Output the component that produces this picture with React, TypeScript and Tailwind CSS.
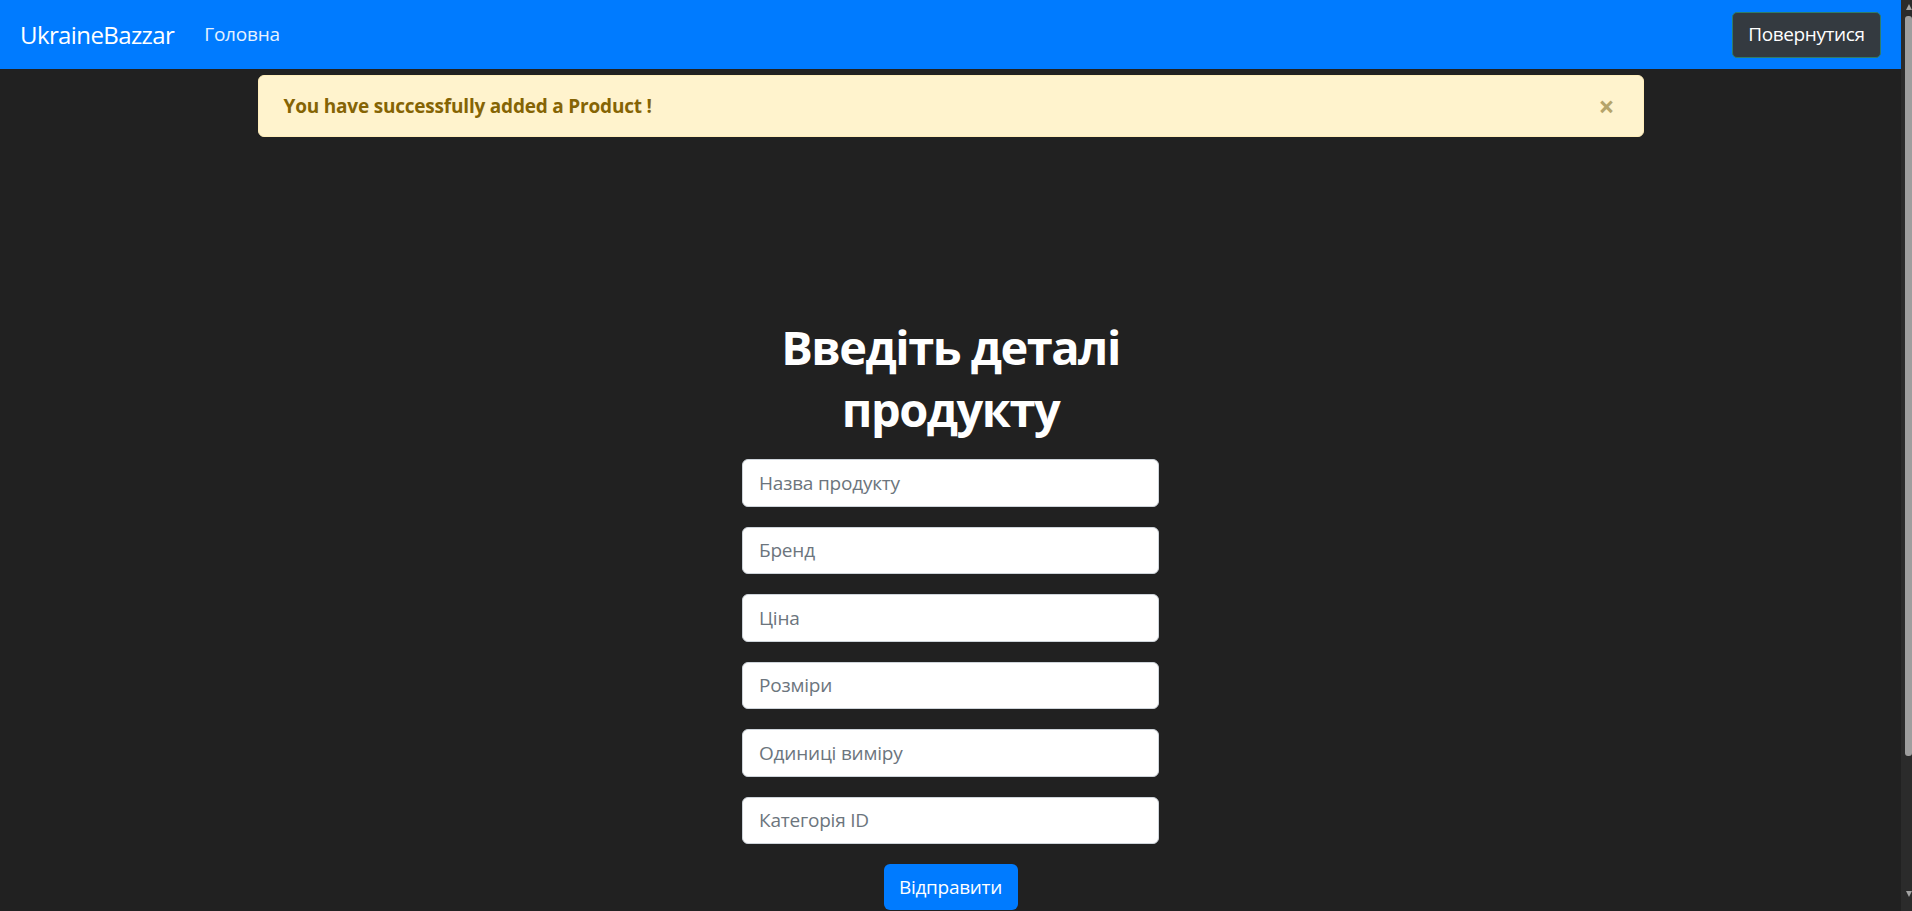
const fields = ["Назва продукту", "Бренд", "Ціна", "Розміри", "Одиниці виміру", "Категорія ID"];

const font = "font-['Open_Sans','Noto_Sans',sans-serif]";

const App = () => {
    return (
        <div className={`flex h-[911px] w-full overflow-hidden bg-[#212121] ${font}`}>
            <div className="flex min-w-0 flex-1 flex-col">
                <nav className="flex h-[69px] shrink-0 items-center bg-[#007bff] pl-[20px] pr-[20px]">
                    <span className="text-[24px] tracking-[-0.6px] text-white">UkraineBazzar</span>
                    <a className="ml-[30px] text-[19px] tracking-[-0.2px] text-white/90">Головна</a>
                    <button className="ml-auto h-[46px] w-[149px] rounded-[5px] border border-[#2f7d68] bg-[#343a40] text-[19px] tracking-[-0.4px] text-white">
                        Повернутися
                    </button>
                </nav>

                <div className="mx-auto mt-[6px] flex h-[62px] w-[1386px] items-center rounded-[6px] border border-[#ffeeba] bg-[#fff3cd] pl-[25px] pr-[28px]">
                    <span className="text-[19px] font-bold tracking-[-0.2px] text-[#856404]">You have successfully added a Product !</span>
                    <span className="ml-auto text-[28px] font-bold leading-none text-[#b5a46a]">×</span>
                </div>

                <div className="mx-auto mt-[179px] flex w-[417px] flex-col items-center">
                    <h1 className="text-center text-[47px] leading-[62px] font-bold tracking-[-1.5px] text-white">
                        Введіть деталі продукту
                    </h1>
                    <form className="mt-[19px] flex w-full flex-col gap-[20px]">
                        {fields.map((f) => (
                            <input
                                key={f}
                                placeholder={f}
                                className="h-[47.5px] w-full rounded-[6px] border border-[#ced4da] bg-white px-[16px] text-[19px] tracking-[-0.2px] text-[#495057] placeholder:text-[#6c757d] outline-none"
                            />
                        ))}
                        <button type="button" className="mx-auto h-[46px] w-[134px] rounded-[6px] bg-[#007bff] text-[19px] tracking-[-0.3px] text-white">
                            Відправити
                        </button>
                    </form>
                </div>
            </div>

            <div className="flex w-[11px] shrink-0 flex-col items-end bg-[#2b2b2b] py-[4px]">
                <div className="h-0 w-0 border-x-[3.5px] border-b-[6px] border-x-transparent border-b-[#a3a3a3]" />
                <div className="mt-[6px] h-[740px] w-[7px] rounded-[3px] bg-[#9e9e9e]" />
                <div className="mt-auto mb-[10px] h-0 w-0 border-x-[3.5px] border-t-[6px] border-x-transparent border-t-[#a3a3a3]" />
            </div>
        </div>
    );
};

export default App;
